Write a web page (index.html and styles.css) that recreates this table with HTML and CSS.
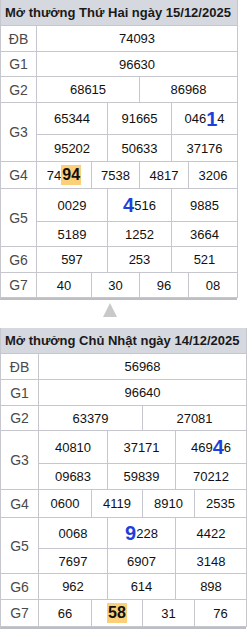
FILE: index.html
```html
<!DOCTYPE html>
<html lang="vi">
<head>
<meta charset="utf-8">
<link rel="stylesheet" href="styles.css">
</head>
<body>
<div class="board board-a">
  <div class="head">Mở thưởng Thứ Hai ngày 15/12/2025</div>
  <div class="lbl">ĐB</div><div class="num s6">74093</div>
  <div class="lbl">G1</div><div class="num s6">96630</div>
  <div class="lbl">G2</div><div class="num s3">68615</div><div class="num s3">86968</div>
  <div class="lbl r2">G3</div><div class="num s2">65344</div><div class="num s2">91665</div><div class="num s2">046<b class="big">1</b>4</div>
  <div class="num s2">95202</div><div class="num s2">50633</div><div class="num s2">37176</div>
  <div class="lbl">G4</div><div class="num s1">74<b class="hl">94</b></div><div class="num s2">7538</div><div class="num s2">4817</div><div class="num s1">3206</div>
  <div class="lbl r2">G5</div><div class="num s2">0029</div><div class="num s2"><b class="big">4</b>516</div><div class="num s2">9885</div>
  <div class="num s2">5189</div><div class="num s2">1252</div><div class="num s2">3664</div>
  <div class="lbl">G6</div><div class="num s2">597</div><div class="num s2">253</div><div class="num s2">521</div>
  <div class="lbl">G7</div><div class="num s1">40</div><div class="num s2">30</div><div class="num s2">96</div><div class="num s1">08</div>
</div>
<div class="sep"><span class="tri"></span></div>
<div class="board board-b">
  <div class="head">Mở thưởng Chủ Nhật ngày 14/12/2025</div>
  <div class="lbl">ĐB</div><div class="num s6">56968</div>
  <div class="lbl">G1</div><div class="num s6">96640</div>
  <div class="lbl">G2</div><div class="num s3">63379</div><div class="num s3">27081</div>
  <div class="lbl r2">G3</div><div class="num s2">40810</div><div class="num s2">37171</div><div class="num s2">469<b class="big">4</b>6</div>
  <div class="num s2">09683</div><div class="num s2">59839</div><div class="num s2">70212</div>
  <div class="lbl">G4</div><div class="num s1">0600</div><div class="num s2">4119</div><div class="num s2">8910</div><div class="num s1">2535</div>
  <div class="lbl r2">G5</div><div class="num s2">0068</div><div class="num s2"><b class="big">9</b>228</div><div class="num s2">4422</div>
  <div class="num s2">7697</div><div class="num s2">6907</div><div class="num s2">3148</div>
  <div class="lbl">G6</div><div class="num s2">962</div><div class="num s2">614</div><div class="num s2">898</div>
  <div class="lbl">G7</div><div class="num s1">66</div><div class="num s2"><b class="hl">58</b></div><div class="num s2">31</div><div class="num s1">76</div>
</div>
</body>
</html>
```
FILE: styles.css
```css
* { box-sizing: border-box; }
body {
  margin: 0;
  background: #fff;
  font-family: "Liberation Sans", Arial, sans-serif;
  font-size: 13px;
  color: #111;
}
.board {
  display: grid;
  border-left: 1px solid #c6c6ce;
  border-bottom: 2px solid #bdbdc4;
}
.board-a {
  width: 237px;
  grid-template-columns: 36px 55px 16px 32px 32px 17px 49px;
  grid-template-rows: 26px 26px 25px 26px 32px 27px 27px 33px 25px 26px 25px;
}
.board-b {
  width: 246px;
  grid-template-columns: 38px 53px 16px 35px 33px 19px 52px;
  grid-template-rows: 26px 26px 26px 25px 33px 26px 28px 31px 25px 26px 27px;
}
.board > div {
  border-right: 1px solid #c6c6ce;
  border-bottom: 1px solid #c6c6ce;
  display: flex;
  align-items: center;
  justify-content: center;
}
.board > .head {
  grid-column: 1 / -1;
  justify-content: flex-start;
  padding-left: 4px;
  background: #d6d8df;
  font-weight: bold;
  font-size: 13px;
  color: #1a1a1a;
  white-space: nowrap;
}
.lbl { color: #4a4a4a; font-size: 14px; }
.r2 { grid-row: span 2; }
.s1 { grid-column: span 1; }
.s2 { grid-column: span 2; }
.s3 { grid-column: span 3; }
.s6 { grid-column: span 6; }
.big {
  color: #1f3fdc;
  font-size: 20px;
  font-weight: bold;
  line-height: 1;
}
.hl {
  background: #fcd079;
  font-size: 16px;
  font-weight: bold;
  padding: 2px 1px;
  line-height: 1;
}
.sep {
  height: 28px;
  width: 220px;
  display: flex;
  justify-content: center;
  padding-top: 3px;
}
.tri {
  width: 0;
  height: 0;
  border-left: 7px solid transparent;
  border-right: 7px solid transparent;
  border-bottom: 14px solid #c9c9c9;
}
```
